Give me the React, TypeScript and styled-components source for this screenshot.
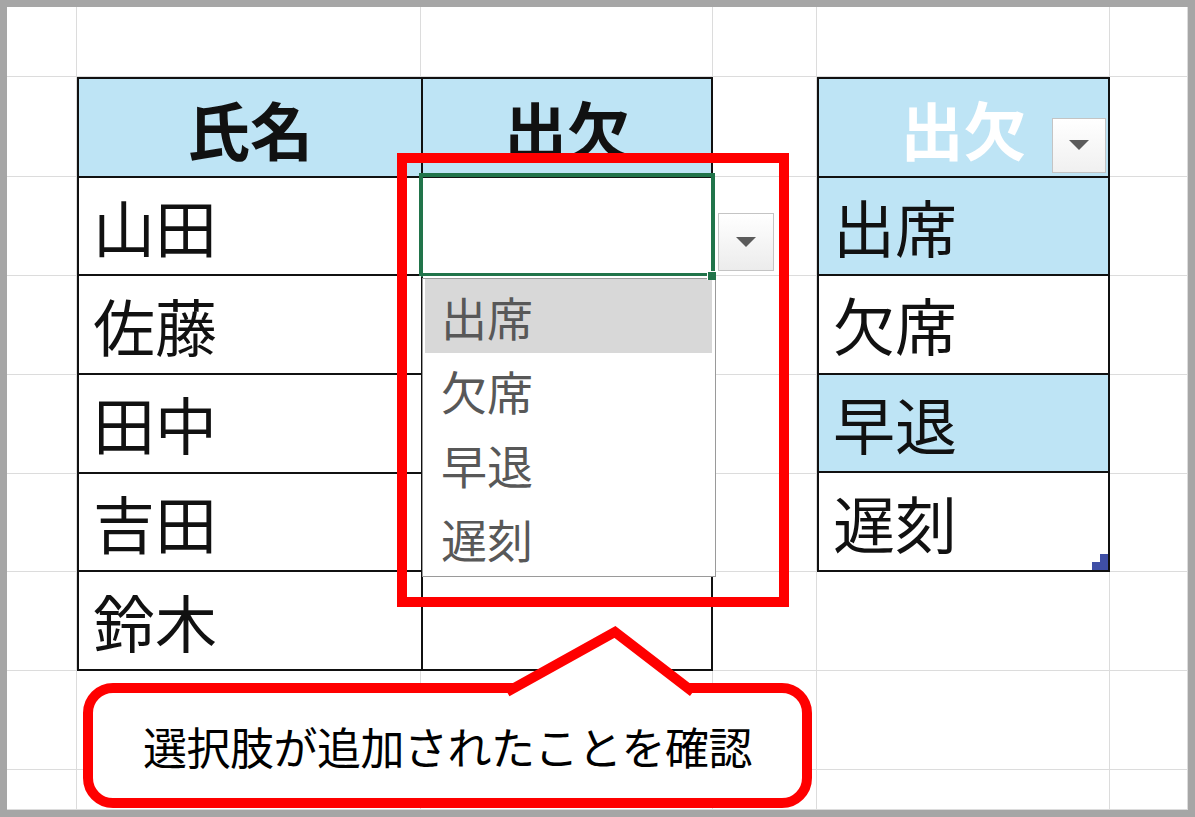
import React from 'react';
import styled, { createGlobalStyle } from 'styled-components';

const GlobalStyle = createGlobalStyle`
  html, body {
    margin: 0;
    padding: 0;
    background: #fff;
  }
  body {
    font-family: "Noto Sans CJK JP", "Noto Sans", sans-serif;
  }
`;

const COLUMN_COUNT = 6;
const ROW_COUNT = 9;

const names = ['山田', '佐藤', '田中', '吉田', '鈴木'];
const options = ['出席', '欠席', '早退', '遅刻'];

export default function App() {
    const gridCells = [];
    for (let r = 1; r <= ROW_COUNT; r++) {
        for (let c = 1; c <= COLUMN_COUNT; c++) {
            gridCells.push(<GridCell key={`${r}-${c}`} $row={r} $col={c} />);
        }
    }

    return (
        <>
            <GlobalStyle />
            <Frame>
                <Sheet>
                    {gridCells}

                    <MainTable>
                        <TableCell $tone="head" $center>
                            氏名
                        </TableCell>
                        <TableCell $tone="head" $center>
                            出欠
                        </TableCell>
                        {names.map((name, i) => (
                            <React.Fragment key={name}>
                                <TableCell $tone="white">{name}</TableCell>
                                {i === 0 ? (
                                    <ActiveCell>
                                        <FillHandle />
                                        <DropButton>
                                            <Arrow />
                                        </DropButton>
                                        <DropList>
                                            {options.map((opt, j) => (
                                                <DropItem key={opt} $selected={j === 0}>
                                                    {opt}
                                                </DropItem>
                                            ))}
                                        </DropList>
                                    </ActiveCell>
                                ) : (
                                    <TableCell $tone="white" />
                                )}
                            </React.Fragment>
                        ))}
                    </MainTable>

                    <ListTable>
                        <TableCell $tone="head" $center $light>
                            出欠
                            <FilterButton>
                                <Arrow />
                            </FilterButton>
                        </TableCell>
                        {options.map((opt, i) => (
                            <TableCell key={opt} $tone={i % 2 === 0 ? 'blue' : 'white'}>
                                {opt}
                                {i === options.length - 1 && <ResizeCorner />}
                            </TableCell>
                        ))}
                    </ListTable>
                </Sheet>

                <Highlight />

                <Callout>
                    <CalloutPointer width="200" height="80" viewBox="0 0 200 80">
                        <polygon points="8,68 110,12 182,68 182,74 8,74" fill="#fff" />
                        <polyline
                            points="2,72 110,12 188,72"
                            fill="none"
                            stroke="#ff0000"
                            strokeWidth="10"
                            strokeLinejoin="miter"
                        />
                    </CalloutPointer>
                    選択肢が追加されたことを確認
                </Callout>
            </Frame>
        </>
    );
}

const Frame = styled.div`
    position: relative;
    box-sizing: border-box;
    width: 1195px;
    height: 817px;
    border: 7px solid #a6a6a6;
    overflow: hidden;
    background: #fff;
`;

const Sheet = styled.div`
    display: grid;
    width: 100%;
    height: 100%;
    grid-template-columns: 70px 344px 292px 104px 293px 1fr;
    grid-template-rows: 70px 100px 99px 99px 99px 98px 99px 99px 1fr;
`;

const GridCell = styled.div<{ $row: number; $col: number }>`
    grid-row: ${(p) => p.$row};
    grid-column: ${(p) => p.$col};
    box-sizing: border-box;
    border-right: 1px solid #dcdcdc;
    border-bottom: 1px solid #dcdcdc;
`;

const Table = styled.div`
    display: grid;
    box-sizing: border-box;
    gap: 2px;
    border: 2px solid #111;
    background: #111;
    position: relative;
`;

const MainTable = styled(Table)`
    grid-column: 2 / 4;
    grid-row: 2 / 8;
    grid-template-columns: 342px 1fr;
    grid-template-rows: repeat(6, 1fr);
`;

const ListTable = styled(Table)`
    grid-column: 5 / 6;
    grid-row: 2 / 7;
    grid-template-columns: 1fr;
    grid-template-rows: repeat(5, 1fr);
`;

const tones = {
    head: '#bee4f5',
    blue: '#bee4f5',
    white: '#ffffff',
};

const TableCell = styled.div<{ $tone: keyof typeof tones; $center?: boolean; $light?: boolean }>`
    position: relative;
    display: flex;
    align-items: center;
    justify-content: ${(p) => (p.$center ? 'center' : 'flex-start')};
    padding: 0 0 0 14px;
    padding-left: ${(p) => (p.$center ? '0' : '14px')};
    background: ${(p) => tones[p.$tone]};
    color: ${(p) => (p.$light ? '#ffffff' : '#111')};
    font-size: ${(p) => (p.$tone === 'head' ? '63px' : '62px')};
    font-weight: ${(p) => (p.$tone === 'head' ? 700 : 400)};
    line-height: 1;
    white-space: nowrap;
`;

const ActiveCell = styled.div`
    position: relative;
    background: #fff;

    &::after {
        content: '';
        position: absolute;
        top: -5px;
        left: -4px;
        right: -4px;
        bottom: -3px;
        border: 4px solid #21744a;
        pointer-events: none;
    }
`;

const FillHandle = styled.span`
    position: absolute;
    right: -5px;
    bottom: -6px;
    width: 8px;
    height: 8px;
    background: #21744a;
    border-top: 1px solid #fff;
    border-left: 1px solid #fff;
    z-index: 2;
`;

const ArrowButton = styled.div`
    position: absolute;
    box-sizing: border-box;
    display: flex;
    align-items: center;
    justify-content: center;
    border: 1px solid #c4c4c4;
    background: linear-gradient(#ffffff, #ececec);
`;

const DropButton = styled(ArrowButton)`
    left: calc(100% + 7px);
    top: 35px;
    width: 56px;
    height: 58px;
`;

const FilterButton = styled(ArrowButton)`
    right: 2px;
    bottom: 3px;
    width: 54px;
    height: 55px;
    background: linear-gradient(#ffffff, #f0f0f0);
`;

const Arrow = styled.span`
    width: 0;
    height: 0;
    border-left: 10px solid transparent;
    border-right: 10px solid transparent;
    border-top: 10px solid #5b5b5b;
`;

const DropList = styled.div`
    position: absolute;
    box-sizing: border-box;
    top: calc(100% + 4px);
    left: -1px;
    width: 294px;
    height: 299px;
    padding: 0 3px 3px 2px;
    border: 1px solid #9a9a9a;
    background: #fff;
    z-index: 1;
`;

const DropItem = styled.div<{ $selected?: boolean }>`
    display: flex;
    align-items: center;
    height: 74px;
    padding-left: 16px;
    background: ${(p) => (p.$selected ? '#d8d8d8' : 'transparent')};
    color: #585858;
    font-size: 46px;
    line-height: 1;
`;

const ResizeCorner = styled.span`
    position: absolute;
    right: 0;
    bottom: 0;
    width: 16px;
    height: 16px;
    background: #3f4fa6;
    clip-path: polygon(50% 0, 100% 0, 100% 100%, 0 100%, 0 50%, 50% 50%);
`;

const Highlight = styled.div`
    position: absolute;
    left: 390px;
    top: 146px;
    width: 392px;
    height: 454px;
    box-sizing: border-box;
    border: 10px solid #ff0000;
    z-index: 3;
    pointer-events: none;
`;

const Callout = styled.div`
    position: absolute;
    left: 76px;
    top: 676px;
    width: 729px;
    height: 125px;
    box-sizing: border-box;
    display: flex;
    align-items: center;
    justify-content: center;
    border: 10px solid #ff0000;
    border-radius: 30px;
    background: #fff;
    color: #000;
    font-size: 44px;
    line-height: 1;
    letter-spacing: -0.5px;
    z-index: 4;
`;

const CalloutPointer = styled.svg`
    position: absolute;
    left: 412px;
    top: -73px;
    overflow: visible;
`;
